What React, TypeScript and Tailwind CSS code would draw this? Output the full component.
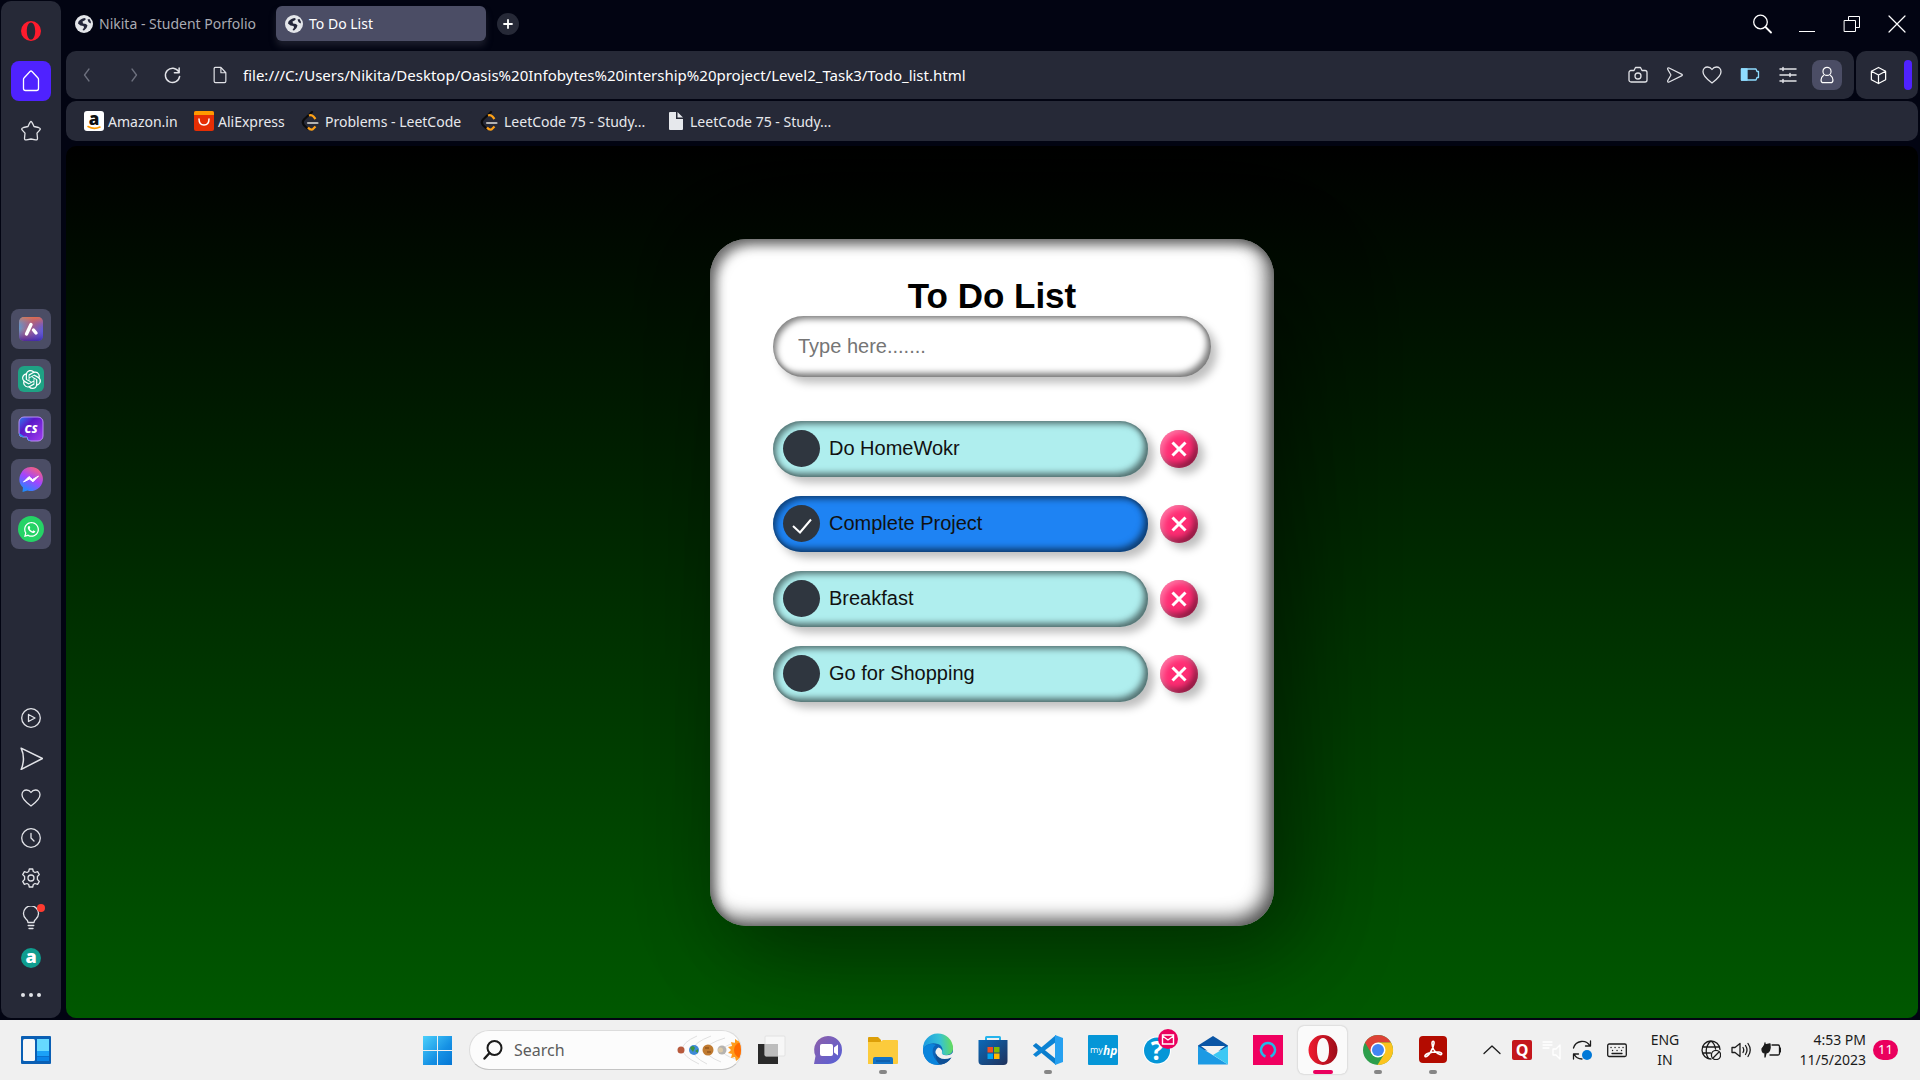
import React, { useState } from "react";
import { SiOpenai } from "react-icons/si";
import { FaWhatsapp } from "react-icons/fa";

type P = { className?: string; children?: React.ReactNode; box?: string };

function Line({ className = "size-5", children, box = "0 0 20 20" }: P) {
  return (
    <svg viewBox={box} className={className} fill="none" stroke="currentColor" strokeWidth="1.3" strokeLinecap="round" strokeLinejoin="round" aria-hidden="true">
      {children}
    </svg>
  );
}

const Globe = () => (
  <svg viewBox="0 0 18 18" className="size-[18px] shrink-0" aria-hidden="true">
    <circle cx="9" cy="9" r="9" fill="#e4e6ea" />
    <path d="M3.500 6.500C5 4.500 7 3.500 9.500 3L11 4L9.500 5.500L7.500 6.500L8 8.500L11 9L12.500 10.500L11.500 13L9 15.500L7.500 15L9 12.500L8.500 11L5.500 10.500L3 8.500zM12.500 4.500L14.500 4L16 7L15.500 8.500L13.500 7z" fill="#23263a" />
  </svg>
);

const OperaMark = ({ className = "size-5" }: P) => (
  <svg viewBox="0 0 20 20" className={className} aria-hidden="true">
    <path fillRule="evenodd" fill="#ff1b2d" d="M10 0a10 10 0 1 0 0 20a10 10 0 1 0 0-20zM10 1.400c2.600 0 4.200 3.900 4.200 8.600s-1.600 8.600-4.200 8.600S5.800 14.700 5.800 10S7.400 1.400 10 1.400z" />
  </svg>
);

const Leet = () => (
  <svg viewBox="0 0 20 20" className="size-5" fill="none" strokeWidth="2.200" aria-hidden="true">
    <path d="M11 1L3 8.500C1.500 10.200 1.500 12.500 3 14.200L6.500 17.500" stroke="#0b0b0d" strokeLinecap="round" />
    <path d="M8 4.500Q10.500 3.500 12.500 5.500L14.500 8M7 16.500Q9 19 11.500 18.500L14.500 15.500" stroke="#ffa116" />
    <path d="M7 12h9.500" stroke="#b3b3b3" strokeLinecap="round" />
  </svg>
);

const Amazon = () => (
  <svg viewBox="0 0 20 20" className="size-5 overflow-visible" aria-hidden="true">
    <rect width="20" height="20" rx="3" fill="#fff" />
    <text x="10" y="14" textAnchor="middle" fontFamily="Open Sans" fontWeight="800" fontSize="17" fill="#111">a</text>
    <path d="M4 15.500q6 3.500 12 .5" stroke="#ff9900" strokeWidth="1.600" fill="none" strokeLinecap="round" />
  </svg>
);

const Ali = () => (
  <svg viewBox="0 0 20 20" className="size-5" aria-hidden="true">
    <rect width="20" height="20" rx="2" fill="#e62e04" />
    <path d="M2 0h16a2 2 0 0 1 2 2v2H0V2a2 2 0 0 1 2-2z" fill="#ff9a00" />
    <path d="M5 8q0 6 5 6t5-6" stroke="#fff" strokeWidth="1.500" fill="none" strokeLinecap="round" />
  </svg>
);

const FilePage = () => (
  <svg viewBox="0 0 14 18" className="h-[18px] w-5" aria-hidden="true">
    <path d="M1 0h6v7h7v10a1 1 0 0 1-1 1H1a1 1 0 0 1-1-1V1a1 1 0 0 1 1-1zM8.500 0L14 5.500H8.500z" fill="#e6e8ec" />
  </svg>
);

const Send = ({ className = "size-5" }: P) => (
  <Line className={className}><path d="M1.800 3.500Q1.500 1.500 3.500 2.300L17.800 9.300Q18.800 10 17.800 10.700L3.500 17.700Q1.500 18.500 1.800 16.500L5.500 10z" /></Line>
);
const Heart = ({ className = "size-5" }: P) => (
  <Line className={className}><path d="M10 18C6 15 1 11.500 1 6.800C1 3.800 3.200 2 5.500 2C7.500 2 9 3 10 4.500C11 3 12.500 2 14.500 2C16.800 2 19 3.800 19 6.800C19 11.500 14 15 10 18z" /></Line>
);

function SideButton({ label, children }: { label: string; children: React.ReactNode }) {
  return (
    <button aria-label={label} className="relative flex size-10 items-center justify-center text-[#e2e3e8]">{children}</button>
  );
}
function AppButton({ label, children }: { label: string; children: React.ReactNode }) {
  return (
    <button aria-label={label} className="flex size-10 items-center justify-center rounded-lg bg-[#4b4d65]">{children}</button>
  );
}

function Sidebar() {
  return (
    <aside className="flex w-[60px] shrink-0 flex-col items-center rounded-[10px] bg-[#262937] pt-5">
      <button aria-label="Opera menu" className="mb-5"><OperaMark className="h-5 w-5" /></button>
      <button aria-label="Home" className="flex size-10 items-center justify-center rounded-lg bg-[#4f22ff] text-white">
        <Line className="size-6" box="0 0 24 24"><path d="M12 2Q12.500 2 13 2.500L19 9Q19.500 9.500 19.500 10.500V19.500Q19.500 21.500 17.500 21.500H6.500Q4.500 21.500 4.500 19.500V10.500Q4.500 9.500 5 9L11 2.500Q11.500 2 12 2z" /></Line>
      </button>
      <div className="mt-2.5"><SideButton label="Speed dials">
        <Line className="size-6" box="0 0 24 24"><path d="M12 2.500Q12.800 2.500 15 7.500L19.500 8.500Q22.500 9.500 20.500 11.300L18 14.200L18.500 19.300Q18.500 21.500 16.500 20.800L12 20L7.500 20.800Q5.500 21.500 5.500 19.300L6 14.200L3.500 11.300Q1.500 9.500 4.500 8.500L9 7.500Q11.200 2.500 12 2.500z" /></Line>
      </SideButton></div>
      <nav aria-label="Apps" className="mt-[158px] flex flex-col gap-[10px]">
        <AppButton label="Aria">
          <svg viewBox="0 0 26 26" className="size-[26px]"><defs>
            <linearGradient id="ar" x1="0" y1="0.300" x2="1" y2="0.800"><stop offset="0" stopColor="#54a8d8" /><stop offset="0.400" stopColor="#b0607c" /><stop offset="1" stopColor="#4c5cf0" /></linearGradient>
            <linearGradient id="ar2" x1="0" y1="0" x2="0" y2="1"><stop offset="0" stopColor="#ef7040" stopOpacity="0.800" /><stop offset="0.500" stopColor="#8050b0" stopOpacity="0" /><stop offset="1" stopColor="#3a1ca0" stopOpacity="0.800" /></linearGradient></defs>
            <rect x="1" y="1" width="24" height="24" rx="5" fill="url(#ar)" /><rect x="1" y="1" width="24" height="24" rx="5" fill="url(#ar2)" />
            <path d="M8.500 18L13 8.500M15.500 14L18 17" stroke="#fff" strokeWidth="3.400" strokeLinecap="round" /></svg>
        </AppButton>
        <AppButton label="ChatGPT"><span className="flex size-[26px] items-center justify-center rounded-md bg-[#1fa284] text-white"><SiOpenai size={19} /></span></AppButton>
        <AppButton label="ChatSonic">
          <svg viewBox="0 0 26 26" className="size-[26px]"><defs><linearGradient id="cs" x1="0" y1="0" x2="1" y2="1"><stop offset="0" stopColor="#2b7df0" /><stop offset="0.350" stopColor="#5a18c8" /><stop offset="1" stopColor="#a23cf0" /></linearGradient></defs>
            <path d="M6 1h14a5 5 0 0 1 5 5v14a5 5 0 0 1-5 5h-7q-4 0-4-4H5q-4 0-4-4V6a5 5 0 0 1 5-5z" fill="url(#cs)" stroke="#b990f5" strokeWidth="1" />
            <path d="M1 17q0 4 4 4h4q0 4 4 4z" fill="#2f8cf0" />
            <text x="13" y="17" textAnchor="middle" fontFamily="Open Sans" fontWeight="800" fontStyle="italic" fontSize="11" fill="#fff">CS</text></svg>
        </AppButton>
        <AppButton label="Messenger">
          <svg viewBox="0 0 26 26" className="size-[26px]"><defs><linearGradient id="ms" x1="0.300" y1="1" x2="0.800" y2="0"><stop offset="0" stopColor="#1b8cff" /><stop offset="0.500" stopColor="#a344ff" /><stop offset="1" stopColor="#ff6470" /></linearGradient></defs>
            <path d="M13 1a12 12 0 1 1-3.500 23.500L4.500 26l.5-4.500A12 12 0 0 1 13 1z" fill="url(#ms)" />
            <path d="M5.500 16L11 10.500L14.500 13.500L20.500 10L15 15.800L11.500 13z" fill="#fff" stroke="#fff" strokeLinejoin="round" /></svg>
        </AppButton>
        <AppButton label="WhatsApp"><span className="flex size-[26px] items-center justify-center rounded-full bg-[#25d366] text-white"><FaWhatsapp size={17} /></span></AppButton>
      </nav>
      <div className="mt-auto mb-1.5 flex flex-col">
        <SideButton label="Player"><Line><circle cx="10" cy="10" r="9.300" /><path d="M7.500 6.500L14 10L7.500 13.500z" /></Line></SideButton>
        <SideButton label="Flow"><Line className="size-[23px]"><path d="M1 1L19.500 10L1 19.500Q5 10 1 1z" /></Line></SideButton>
        <SideButton label="Pinboards"><Heart /></SideButton>
        <SideButton label="History"><Line><circle cx="10" cy="10" r="9.300" /><path d="M10 5.500V10L13 13" /></Line></SideButton>
        <SideButton label="Settings"><Line><path d="M8.300 1h3.400l.6 2.500 1.700 1 2.600-.9 1.700 3-1.900 1.900v3l1.900 1.900-1.700 3-2.600-.9-1.700 1-.6 2.500H8.300l-.6-2.500-1.700-1-2.600.9-1.700-3 1.900-1.900v-3L1.700 6.600l1.700-3 2.600.9 1.700-1z" /><circle cx="10" cy="10" r="3" /></Line></SideButton>
        <SideButton label="Tips">
          <Line className="size-6" box="0 0 24 24"><path d="M9 16.500Q9 14.500 7 13A7.500 7.500 0 1 1 17 13Q15 14.500 15 16.500zM9.200 19.500h5.600M10 22.500h4" /></Line>
          <span className="absolute top-1.5 right-1.5 size-2 rounded-full bg-[#ff3b30]" />
        </SideButton>
        <SideButton label="Amazon">
          <svg viewBox="0 0 20 20" className="size-5 overflow-visible"><circle cx="10" cy="10" r="10" fill="#0f9d8f" /><text x="10" y="15" textAnchor="middle" fontFamily="Open Sans" fontWeight="800" fontSize="18" fill="#fff">a</text></svg>
        </SideButton>
        <button aria-label="More" className="flex h-[34px] items-center justify-center gap-1">
          <i className="size-1 rounded-full bg-[#e2e3e8]" /><i className="size-1 rounded-full bg-[#e2e3e8]" /><i className="size-1 rounded-full bg-[#e2e3e8]" />
        </button>
      </div>
    </aside>
  );
}

function TabStrip() {
  return (
    <header className="flex h-[50px] items-start pr-[11px] pl-[9px] text-[14px]">
      <button className="mt-[5px] flex h-[35px] w-[201px] items-center gap-1.5 whitespace-nowrap text-[#a9abb3]"><Globe />Nikita - Student Porfolio</button>
      <button className="mt-[5px] flex h-[35px] w-[210px] items-center gap-1.5 rounded-md bg-[#4b4d65] pl-[9px] whitespace-nowrap text-white shadow-[0_5px_6px_#1b1d2b]"><Globe />To Do List</button>
      <button aria-label="New tab" className="mt-3 ml-[11px] flex size-[22px] items-center justify-center rounded-full bg-[#262937] text-white">
        <Line className="size-[10px]" box="0 0 10 10"><path d="M5 1v8M1 5h8" strokeWidth="1.800" /></Line>
      </button>
      <div className="mt-[13px] ml-auto flex items-center gap-[25px] text-white">
        <button aria-label="Search tabs"><Line><circle cx="8.500" cy="8" r="6.800" /><path d="M13.500 13L19 18.500" strokeWidth="1.800" /></Line></button>
        <button aria-label="Minimize"><Line><path d="M2 17.500h16" strokeLinecap="butt" strokeWidth="1" /></Line></button>
        <button aria-label="Restore"><Line><path d="M2.500 6.500h11v11h-11zM6.500 6V2.500h11v11H14" strokeLinejoin="miter" strokeWidth="1" /></Line></button>
        <button aria-label="Close"><Line><path d="M2 2l16 16M18 2L2 18" strokeWidth="1.200" /></Line></button>
      </div>
    </header>
  );
}

function Toolbar() {
  return (
    <div className="flex h-12 gap-0.5">
      <div className="flex flex-1 items-center rounded-[10px] bg-[#262937] pr-3 pl-[11px] text-[#e2e3e8]">
        <button aria-label="Back" className="text-[#6d707e]"><Line><path d="M12 4L7.500 10L12 16" /></Line></button>
        <button aria-label="Forward" className="ml-[27px] text-[#6d707e]"><Line><path d="M8 4L12.500 10L8 16" /></Line></button>
        <button aria-label="Reload" className="ml-[19px]"><Line className="size-[19px]"><path d="M16.500 6A7.500 7.500 0 1 0 17.500 11M17 2v5h-5" strokeWidth="1.600" /></Line></button>
        <Line className="ml-[29px] h-[18px] w-[18px]"><path d="M3.500 2.500V17a1.500 1.500 0 0 0 1.500 1.500h10a1.500 1.500 0 0 0 1.500-1.500V7.500L11 1.500H5a1.500 1.500 0 0 0-1.500 1zM11 2v5.500h5" /></Line>
        <input aria-label="Address" className="ml-[14px] min-w-0 flex-1 bg-transparent text-[15px] text-white outline-none" defaultValue="file:///C:/Users/Nikita/Desktop/Oasis%20Infobytes%20intership%20project/Level2_Task3/Todo_list.html" />
        <div className="flex items-center gap-[18px]">
          <button aria-label="Snapshot"><Line><path d="M3 5.500h3L7.500 2.500h5L14 5.500h3a2 2 0 0 1 2 2V15a2 2 0 0 1-2 2H3a2 2 0 0 1-2-2V7.500a2 2 0 0 1 2-2z" /><circle cx="10" cy="11" r="3" /></Line></button>
          <button aria-label="Send to flow"><Send className="size-[18px]" /></button>
          <button aria-label="Add to pinboard"><Heart className="size-5" /></button>
          <button aria-label="Battery saver" className="text-[#8fdcff]"><Line><path d="M1.500 4H16l1 2.500h1.500v6H17L16 15H1.500z" /><path d="M1.500 4H7v11H1.500z" fill="currentColor" /></Line></button>
          <button aria-label="Easy setup"><Line><path d="M2 4h16M2 10h16M2 16h16M5 2.500v3M12 8.500v3M5 14.500v3" strokeWidth="1.500" /></Line></button>
          <button aria-label="Profile" className="-ml-1 flex size-[30px] items-center justify-center rounded-lg bg-[#4b4d65] text-white"><Line className="size-[18px]"><circle cx="10" cy="6" r="4.500" /><path d="M6 10.500C2.500 13 2.500 18.500 6 18.500h8c3.500 0 3.500-5.500 0-8" /></Line></button>
        </div>
      </div>
      <div className="flex w-[62px] items-center justify-between rounded-[10px] bg-[#262937] pr-1.5 pl-[13px] text-white">
        <button aria-label="Extensions"><Line className="size-[19px]"><path d="M10 1.500L17.500 5.500V14.500L10 18.500L2.500 14.500V5.500zM2.500 5.500L10 9.500L17.500 5.500M10 9.500V18.500" /></Line></button>
        <span className="h-[30px] w-2 rounded-full bg-[#4f22ff]" />
      </div>
    </div>
  );
}

function Bookmarks() {
  const items: [React.ReactNode, string, string][] = [
    [<Amazon />, "Amazon.in", "min-w-[94px]"],
    [<Ali />, "AliExpress", "min-w-[91px]"],
    [<Leet />, "Problems - LeetCode", "min-w-[163px]"],
    [<Leet />, "LeetCode 75 - Study...", "min-w-[170px]"],
    [<FilePage />, "LeetCode 75 - Study...", "min-w-[170px]"],
  ];
  return (
    <nav aria-label="Bookmarks" className="mt-0.5 flex h-10 items-center gap-4 rounded-[10px] bg-[#262937] pl-[18px] text-[14px] text-[#e6e8ec]">
      {items.map(([icon, text, width], i) => (
        <a key={i} href="#" className={"flex items-center gap-1 whitespace-nowrap " + width}>{icon}{text}</a>
      ))}
    </nav>
  );
}

function TodoPage() {
  const [tasks, setTasks] = useState([
    { id: 1, text: "Do HomeWokr", done: false },
    { id: 2, text: "Complete Project", done: true },
    { id: 3, text: "Breakfast", done: false },
    { id: 4, text: "Go for Shopping", done: false },
  ]);
  const [draft, setDraft] = useState("");
  const add = (e: React.FormEvent) => {
    e.preventDefault();
    if (!draft.trim()) return;
    setTasks([...tasks, { id: Date.now(), text: draft, done: false }]);
    setDraft("");
  };
  return (
    <main className="mt-[5px] flex flex-1 items-start justify-center overflow-hidden rounded-[10px] bg-[linear-gradient(to_bottom,#000000,#005800)] pt-[93px] pb-[92px] font-['Liberation_Sans',Arial,sans-serif]">
      <section className="min-h-[687px] w-[564px] rounded-[37px] bg-white px-[63px] pt-[37px] shadow-[31px_31px_94px_rgba(0,0,0,0.25),12px_12px_88px_rgba(0,0,0,0.25),inset_6px_6px_12px_rgba(0,0,0,0.5),inset_6px_6px_25px_rgba(255,255,255,0.2),inset_-6px_-6px_19px_rgba(0,0,0,0.75)]">
        <h1 className="text-center text-[35px] leading-10 font-bold text-black">To Do List</h1>
        <form onSubmit={add}>
          <input aria-label="New task" placeholder="Type here......." value={draft} onChange={(e) => setDraft(e.target.value)}
            className="h-[61px] w-full rounded-full bg-white px-[25px] text-[20px] text-black outline-none placeholder:text-[#757575] shadow-[6px_6px_9px_rgba(0,0,0,0.25),inset_3px_3px_6px_rgba(0,0,0,0.5),inset_-4px_-4px_6px_rgba(0,0,0,0.5)]" />
        </form>
        <ul className="mt-11 flex flex-col gap-[19px]">
          {tasks.map((t) => (
            <li key={t.id} className="flex items-center gap-3">
              <label className={"flex h-14 w-[375px] items-center gap-[9px] rounded-full pb-0.5 pl-[10px] text-[20px] text-[#111] shadow-[6px_6px_9px_rgba(0,0,0,0.25),inset_3px_3px_6px_rgba(0,0,0,0.5),inset_-4px_-4px_6px_rgba(0,0,0,0.5)] " + (t.done ? "bg-[#1e83f3]" : "bg-[#afeeee]")}>
                <span className="relative flex size-[37px] items-center justify-center rounded-full bg-[#2f363f]">
                  <input type="checkbox" checked={t.done} onChange={() => setTasks(tasks.map((x) => (x.id === t.id ? { ...x, done: !x.done } : x)))} className="absolute inset-0 appearance-none rounded-full" />
                  {t.done && <svg viewBox="0 0 20 16" className="pointer-events-none mt-1.5 h-4 w-5" fill="none" stroke="#fff" strokeWidth="2"><path d="M1 8l7 6.500L19 1.500" /></svg>}
                </span>
                {t.text}
              </label>
              <button aria-label={"Delete " + t.text} onClick={() => setTasks(tasks.filter((x) => x.id !== t.id))}
                className="flex size-[38px] items-center justify-center rounded-full bg-[#ff2d74] shadow-[6px_6px_9px_rgba(0,0,0,0.25),inset_3px_3px_6px_rgba(255,255,255,0.35),inset_-4px_-4px_6px_rgba(0,0,0,0.44)]">
                <svg viewBox="0 0 16 16" className="size-4" stroke="#fff" strokeWidth="3"><path d="M1.500 1.500l13 13M14.500 1.500l-13 13" /></svg>
              </button>
            </li>
          ))}
        </ul>
      </section>
    </main>
  );
}

function Dock({ label, children, mark }: { label: string; children: React.ReactNode; mark?: "idle" | "active" }) {
  return (
    <button aria-label={label} className={"relative flex h-12 w-[49px] items-center justify-center rounded-md " + (mark === "active" ? "bg-[#fafafa] shadow-[0_0_2px_rgba(0,0,0,0.25)]" : "")}>
      <svg viewBox="0 0 30 30" className="size-[30px] overflow-visible" aria-hidden="true">{children}</svg>
      {mark === "idle" && <span className="absolute bottom-0 h-1 w-2 rounded-full bg-[#868686]" />}
      {mark === "active" && <span className="absolute bottom-0 h-1 w-5 rounded-full bg-[#ea005e]" />}
    </button>
  );
}

function Taskbar() {
  return (
    <footer className="flex h-[60px] items-center bg-[#f0f0f0] pr-[22px] text-[#1b1b1b]">
      <div className="flex w-[423px] pl-[21px]">
        <button aria-label="Widgets">
          <svg viewBox="0 0 30 28" className="h-7 w-[30px]"><rect width="30" height="28" rx="1" fill="#0a5fb4" /><rect x="2" y="3" width="12" height="22" rx="1.500" fill="#f7f7f7" /><path d="M16 3h12v12H16z" fill="#66d9ff" /><path d="M16 15h12v5H16z" fill="#1ba1f7" /><path d="M16 20.500h12V25H16z" fill="#0a84e8" /></svg>
        </button>
      </div>
      <div className="flex items-center">
        <button aria-label="Start">
          <svg viewBox="0 0 29 29" className="size-[29px]"><defs><linearGradient id="win" x1="0" y1="0" x2="1" y2="1"><stop offset="0" stopColor="#4cd0fb" /><stop offset="0.600" stopColor="#1590e4" /><stop offset="1" stopColor="#0576d4" /></linearGradient></defs><path d="M0 0h14v14H0zM15 0h14v14H15zM0 15h14v14H0zM15 15h14v14H15z" fill="url(#win)" /></svg>
        </button>
        <label className="ml-[17px] flex h-10 w-[273px] items-center overflow-hidden rounded-full border border-[#dcdcdc] border-b-[#c4c4c4] bg-[#fcfcfc] pl-[13px]">
          <Line className="size-5"><circle cx="11.500" cy="8" r="7" strokeWidth="2" /><path d="M6.500 13L1.500 18.500" strokeWidth="2.400" /></Line>
          <input aria-label="Search" placeholder="Search" className="ml-[11px] w-0 flex-1 bg-transparent text-[16px] outline-none placeholder:text-[#5c5c5c]" />
          <svg viewBox="0 0 66 38" className="h-[38px] w-[66px]" fill="none" aria-hidden="true">
            <path d="M22 5Q-8 18 24 33M36 5Q2 18 32 33M50 7Q14 18 46 31M62 11Q34 19 60 28" stroke="#e0e0e0" />
            <circle cx="6" cy="19" r="3.500" fill="#b85a3c" /><circle cx="19" cy="19" r="5" fill="#3f8ad8" /><path d="M15 17q3-4 5 0l-2 4zM20 20l3-2v4z" fill="#3c9440" /><circle cx="33" cy="19" r="5.500" fill="#c07a30" /><path d="M30 17h4M32 21h4" stroke="#7c4412" /><circle cx="47" cy="19" r="4.500" fill="#b6b3b0" /><circle cx="45.500" cy="19" r="2.500" fill="#dbc9a8" />
            <path d="M66 7l-3 3-3-2 0 4-4-1 1 4-4 1 3 3-3 3 4 1-1 4 4-1 1 4 3-2 2 3z" fill="#ff9b1c" /><path d="M66 11q-7 2-7 8t7 9z" fill="#ff6a00" />
          </svg>
        </label>
        <div className="ml-[6px] flex items-center gap-1.5">
          <Dock label="Task view"><path d="M0 9h20v20H0z" fill="#2a2a2a" /><rect x="7" y="1" width="20" height="20" rx="1" fill="#f7f7f7" stroke="#e2e2e2" /><path d="M7 9h13v12H7z" fill="#bdbdbd" /></Dock>
          <Dock label="Chat"><defs><linearGradient id="ch" x1="0" y1="0" x2="1" y2="1"><stop offset="0" stopColor="#8f5fa8" /><stop offset="1" stopColor="#5560d8" /></linearGradient></defs><path d="M15 1a14 14 0 1 1 0 28H1l1.500-8A14 14 0 0 1 15 1z" fill="url(#ch)" /><rect x="7" y="9" width="13" height="12" rx="2" fill="#fff" /><path d="M21 12.500l4-3v11l-4-3z" fill="#fff" /></Dock>
          <Dock label="File Explorer" mark="idle"><path d="M0 3q0-1 1-1h9l3 3v5H0z" fill="#dd9f08" /><path d="M0 7h12l3-2h14q1 0 1 1v22q0 1-1 1H0z" fill="#fccb3c" /><path d="M5 29v-5q0-2 2-2h16q2 0 2 2v5z" fill="#1273c8" /><path d="M8 26h14" stroke="#0a4e93" /></Dock>
          <Dock label="Edge"><defs><linearGradient id="ed" x1="0" y1="0.300" x2="1" y2="0.200"><stop offset="0" stopColor="#1d9be0" /><stop offset="0.550" stopColor="#35c1d6" /><stop offset="1" stopColor="#6be04c" /></linearGradient></defs><circle cx="15" cy="15" r="15" fill="#0c63b8" /><path d="M0 14A15 15 0 0 1 30 13C30 18 27 20 23 20c-3 0-5-1-4-3c1-2 1-6-4-8C9 7 3 9 0 14z" fill="url(#ed)" /><path d="M0 14c3-5 9-6 13-4c-5 2-5 14 5 19C8 32 0 25 0 14z" fill="#0a84dc" /><path d="M15.500 12.500Q12 14.500 12.500 18Q14 24.500 21 25Q25.500 25 28.500 22.500L31 20V16Q28.500 20.500 23 20.200Q18 20 19 17Q19.500 14 15.500 12.500z" fill="#f0f0f0" /><path d="M12.500 18Q13 29 18 29.500Q25 28.500 28.500 22.500Q17 27 12.500 18z" fill="#0e5096" /></Dock>
          <Dock label="Microsoft Store"><path d="M8 6V2.500Q8 2 8.500 2h13q.5 0 .5.500V6" fill="none" stroke="#25b4ec" strokeWidth="2" /><defs><linearGradient id="st" x1="0" y1="0" x2="1" y2="1"><stop offset="0" stopColor="#0b69b8" /><stop offset="1" stopColor="#20325c" /></linearGradient></defs><path d="M.5 5h29v21q0 4-4 4h-21q-4 0-4-4z" fill="url(#st)" /><path d="M9.500 12H15v5.500H9.500z" fill="#f25022" /><path d="M16 12h5.500v5.500H16z" fill="#7fba00" /><path d="M9.500 18.500H15V24H9.500z" fill="#00a4ef" /><path d="M16 18.500h5.500V24H16z" fill="#ffb900" /></Dock>
          <Dock label="Visual Studio Code" mark="idle"><path d="M0 10.500L3 8L23 24v6L0 11z" fill="#0a7ccc" /><path d="M0 19.500L3 22 23 7V0z" fill="#0c83d4" /><path d="M22 0l8 3v24l-8 3z" fill="#26a0f0" /></Dock>
          <Dock label="myHP"><rect width="30" height="30" rx="1" fill="#0596d7" /><text x="2" y="18" fontFamily="Open Sans" fontSize="9" fill="#fff">my</text><text x="15" y="20" fontFamily="Open Sans" fontStyle="italic" fontWeight="700" fontSize="12" fill="#fff">hp</text></Dock>
          <Dock label="HP Support"><circle cx="14" cy="15.500" r="14" fill="#fff" /><circle cx="14" cy="15.500" r="13" fill="#0596d7" /><text x="14" y="25" textAnchor="middle" fontFamily="Open Sans" fontWeight="700" fontSize="26" fill="#fff">?</text><circle cx="25" cy="4" r="10" fill="#ea005e" /><path d="M19.500 0h11v9h-11zM19.500 1l5.500 4 5.500-4" fill="none" stroke="#fff" strokeWidth="1.400" /></Dock>
          <Dock label="Mail"><path d="M0 10.500L15 1l15 9.500v5H0z" fill="#0a55a5" /><path d="M3 11h24L15 20z" fill="#f2f2f2" /><path d="M0 11l30 18.500H0z" fill="#1c9ae4" /><path d="M30 11L15 20l15 9.500z" fill="#3cc8f4" /></Dock>
          <Dock label="Alexa"><path d="M0 0h30v30H0z" fill="#f00060" /><path d="M12.500 21.500a7 7 0 1 1 5 0" fill="none" stroke="#22b8e8" strokeWidth="2.500" /></Dock>
          <Dock label="Opera" mark="active"><defs><linearGradient id="op" x1="0" y1="0" x2="1" y2="0"><stop offset="0" stopColor="#f01c30" /><stop offset="1" stopColor="#9c0c18" /></linearGradient></defs><path fillRule="evenodd" fill="url(#op)" d="M15 0a14.500 15 0 1 0 0 30a14.500 15 0 1 0 0-30zM15 3c4 0 6 5 6 12s-2 12-6 12s-6-5-6-12s2-12 6-12z" /></Dock>
          <Dock label="Chrome" mark="idle"><circle cx="15" cy="15" r="15" fill="#2c9e4b" /><path d="M2 7.500A15 15 0 0 1 28 7.500H15L8.500 18.500z" fill="#dd4236" /><path d="M28 7.500A15 15 0 0 1 14.500 30L21.500 18.500L15 7.500z" fill="#fcc31e" /><circle cx="15" cy="15" r="7.500" fill="#fff" /><circle cx="15" cy="15" r="6" fill="#4285f4" /></Dock>
          <Dock label="Acrobat" mark="idle"><rect x="1" y="1" width="28" height="27" rx="4" fill="#b30b00" /><path d="M7 21.500c-1-2 5-5 14-4.500c4 1 3 3 1 2.500C18 18 14 14 14 8.500c0-3 2.500-3 2 0C15.500 13 10 23 7 21.500z" fill="none" stroke="#fff" strokeWidth="1.600" /></Dock>
        </div>
      </div>
      <div className="ml-auto flex items-center gap-[10px]">
        <button aria-label="Hidden icons"><Line><path d="M2 13.500L10 6l8 7.500" /></Line></button>
        <button aria-label="Quick Heal"><svg viewBox="0 0 20 20" className="size-5 overflow-visible"><rect width="20" height="20" rx="2" fill="#c4161c" /><text x="10" y="16" textAnchor="middle" fontFamily="Open Sans" fontWeight="700" fontSize="16" fill="#fff">Q</text></svg></button>
        <button aria-label="Audio" className="text-white"><Line><path d="M1 2h9M1 5h9M1 8h6M11 9h3l4-4v14l-4-4h-3z" /></Line></button>
        <button aria-label="Updates"><Line><path d="M1.500 8A9 9 0 0 1 18 6M18.500 1v5h-5M10 19A9 9 0 0 1 2 14M1.500 19v-5h5" /><circle cx="15" cy="15" r="5" fill="#0078d7" stroke="none" /></Line></button>
        <button aria-label="Touch keyboard" className="ml-[5px]"><Line><rect x="0.700" y="4" width="18.600" height="12.500" rx="1.500" /><path d="M4 7.500h.1M8 7.500h.1M12 7.500h.1M16 7.500h.1M5.500 10.500h.1M10 10.500h.1M14.500 10.500h.1M5 13.500h10" /></Line></button>
        <button className="ml-2 w-10 text-center text-[14px] leading-5">ENG<br />IN</button>
        <div className="ml-[6px] flex gap-[10px]">
          <button aria-label="Network"><Line><path d="M10 19A9 9 0 1 1 19 9.500M10 1C4 6 4 14 8 19M10 1q4 3 4.500 8M1.500 7h17M1.500 13h8" /><circle cx="15" cy="15" r="4.600" /><path d="M12 18l6-6" /></Line></button>
          <button aria-label="Volume"><Line><path d="M1 7.500h3L9 3.500v13l-5-4H1zM12 7.500q1.500 2.500 0 5M14.500 5.500q3 4.500 0 9M17 3.500q4.500 6.500 0 13" /></Line></button>
          <button aria-label="Battery"><Line><path d="M11 5h6q1.500 0 1.500 1.500v7Q18.500 15 17 15H9" /><path d="M19.500 8.500v3" strokeWidth="2" /><path d="M1 9l3-4 0-2M1 9q0 4 3 4v4l1-4q5-1 4-9l-5 1z" fill="currentColor" /></Line></button>
        </div>
        <button className="ml-[10px] flex w-[65px] flex-col items-end text-[14px] leading-5 whitespace-nowrap"><span>4:53 PM</span><span>11/5/2023</span></button>
        <button aria-label="11 notifications" className="-ml-[3px] flex h-5 w-[25px] items-center justify-center rounded-full bg-[#ea005e] text-[13px] text-white">11</button>
      </div>
    </footer>
  );
}

export default function App() {
  return (
    <div className="flex min-h-screen flex-col bg-[#020412] font-['Noto_Sans','Open_Sans',sans-serif]">
      <div className="flex flex-1 gap-[5px] py-px pr-0.5 pb-0.5 pl-px">
        <Sidebar />
        <div className="flex min-w-0 flex-1 flex-col">
          <TabStrip />
          <Toolbar />
          <Bookmarks />
          <TodoPage />
        </div>
      </div>
      <Taskbar />
    </div>
  );
}
